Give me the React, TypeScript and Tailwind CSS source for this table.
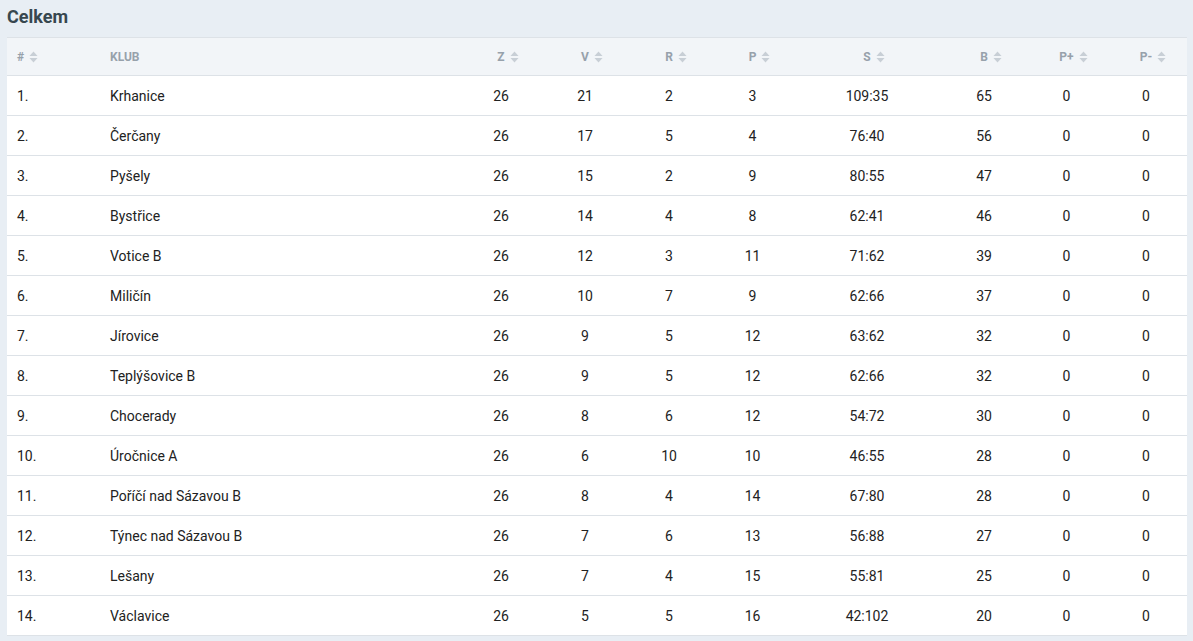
const rows: [string, string, number, number, number, number, string, number][] = [
  ["1.", "Krhanice", 26, 21, 2, 3, "109:35", 65],
  ["2.", "Čerčany", 26, 17, 5, 4, "76:40", 56],
  ["3.", "Pyšely", 26, 15, 2, 9, "80:55", 47],
  ["4.", "Bystřice", 26, 14, 4, 8, "62:41", 46],
  ["5.", "Votice B", 26, 12, 3, 11, "71:62", 39],
  ["6.", "Miličín", 26, 10, 7, 9, "62:66", 37],
  ["7.", "Jírovice", 26, 9, 5, 12, "63:62", 32],
  ["8.", "Teplýšovice B", 26, 9, 5, 12, "62:66", 32],
  ["9.", "Chocerady", 26, 8, 6, 12, "54:72", 30],
  ["10.", "Úročnice A", 26, 6, 10, 10, "46:55", 28],
  ["11.", "Poříčí nad Sázavou B", 26, 8, 4, 14, "67:80", 28],
  ["12.", "Týnec nad Sázavou B", 26, 7, 6, 13, "56:88", 27],
  ["13.", "Lešany", 26, 7, 4, 15, "55:81", 25],
  ["14.", "Václavice", 26, 5, 5, 16, "42:102", 20],
];

const cols = [
  { label: "#", w: "w-[93px]", align: "text-left pl-[10px]", sort: true },
  { label: "KLUB", w: "w-[359px]", align: "text-left pl-[10px]", sort: false },
  { label: "Z", w: "w-[84px]", align: "text-center", sort: true },
  { label: "V", w: "w-[84px]", align: "text-center", sort: true },
  { label: "R", w: "w-[84px]", align: "text-center", sort: true },
  { label: "P", w: "w-[83px]", align: "text-center", sort: true },
  { label: "S", w: "w-[146px]", align: "text-center", sort: true },
  { label: "B", w: "w-[88px]", align: "text-center", sort: true },
  { label: "P+", w: "w-[77px]", align: "text-center", sort: true },
  { label: "P-", w: "w-[82px]", align: "text-center", sort: true },
];

function SortIcon() {
  return (
    <svg width="9" height="12" viewBox="0 0 9 12" className="absolute left-full top-1/2 -translate-y-1/2 ml-[5px]">
      <path d="M4.5 0.5 L8.5 5 H0.5 Z" fill="#c8cfd6" />
      <path d="M4.5 11.5 L8.5 7 H0.5 Z" fill="#c8cfd6" />
    </svg>
  );
}

export default function App() {
  return (
    <div className="min-h-[641px] bg-[#e8eef4] px-[7px] pt-[4px] pb-[6px] font-['Roboto',sans-serif]">
      <h2 className="text-[18px] leading-[26px] font-bold text-[#37474f] mb-[7px]">Celkem</h2>
      <table className="w-[1180px] border-collapse table-fixed bg-white">
        <thead>
          <tr className="bg-[#f2f5f8] h-[38px] border-t border-b border-[#dde2e7]">
            {cols.map((c) => (
              <th key={c.label} className={`${c.w} ${c.align} text-[12px] font-bold text-[#97a1ab] uppercase`}>
                <span className="relative">
                  {c.label}
                  {c.sort && <SortIcon />}
                </span>
              </th>
            ))}
          </tr>
        </thead>
        <tbody>
          {rows.map((r) => (
            <tr key={r[0]} className="h-[40px] border-b border-[#dde2e7] text-[14px] text-[#222] [&>td]:pt-[2px]">
              <td className="pl-[10px]">{r[0]}</td>
              <td className="pl-[10px]">{r[1]}</td>
              <td className="text-center">{r[2]}</td>
              <td className="text-center">{r[3]}</td>
              <td className="text-center">{r[4]}</td>
              <td className="text-center">{r[5]}</td>
              <td className="text-center">{r[6]}</td>
              <td className="text-center">{r[7]}</td>
              <td className="text-center">0</td>
              <td className="text-center">0</td>
            </tr>
          ))}
        </tbody>
      </table>
    </div>
  );
}
